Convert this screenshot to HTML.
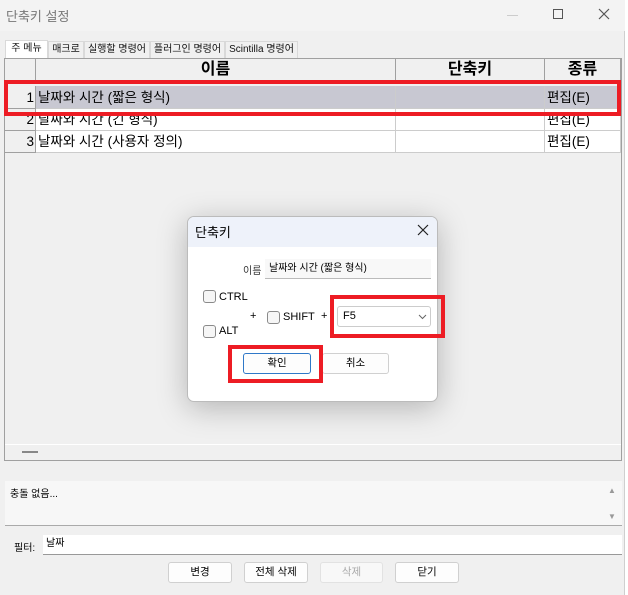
<!DOCTYPE html>
<html><head><meta charset="utf-8"><style>
*{box-sizing:border-box;margin:0;padding:0}
body{width:628px;height:595px;background:#fff;font-family:"Liberation Sans","Noto Sans CJK KR",sans-serif;position:relative;overflow:hidden;color:#000}
.a{position:absolute}
.win{left:0;top:0;width:625px;height:595px;background:#f0f0f0;border-right:1px solid #cfcfcf}
.tb{left:0;top:0;width:625px;height:31px;background:#f3f3f3}
.tab{top:41px;height:17px;font-size:10px;line-height:16px;text-align:center;border:1px solid #d9d9d9;border-bottom:none;background:#f0f0f0;color:#111}
.hd{font-size:16px;font-weight:bold;text-align:center;line-height:22px;background:#f0f0f0;border-right:1px solid #a0a0a0;border-bottom:1px solid #a0a0a0}
.cell{font-size:13.5px;line-height:22px;border-right:1px solid #ccc;border-bottom:1px solid #ccc;background:#fff;padding-left:2px;white-space:nowrap;overflow:hidden}
.rh{background:#f0f0f0;text-align:right;padding-right:1px;border-right:1px solid #a0a0a0;border-bottom:1px solid #a0a0a0}
.red{border:4px solid #ed1c24}
.btn{height:21px;background:#fdfdfd;border:1px solid #d0d0d0;border-radius:3px;font-size:10.5px;text-align:center;line-height:19px}
.cb{width:13px;height:13px;border:1px solid #8a8a8a;border-radius:3px;background:#f6f6f6}
.lb{font-size:11px;line-height:13px}
</style></head><body>
<div class="a win"></div>
<div class="a tb"></div>
<div class="a" style="left:6px;top:6px;font-size:13px;color:#777">단축키 설정</div>
<div class="a" style="left:507px;top:15px;width:11px;height:1px;background:#ccc"></div>
<div class="a" style="left:553px;top:9px;width:10px;height:10px;border:1px solid #555"></div>
<svg class="a" style="left:598px;top:8px" width="12" height="12"><path d="M1 1L11 11M11 1L1 11" stroke="#555" stroke-width="1.2"/></svg>

<div class="a tab" style="left:5px;width:43px;background:#fff;top:40px;height:19px">주 메뉴</div>
<div class="a tab" style="left:48px;width:36px">매크로</div>
<div class="a tab" style="left:84px;width:66px">실행할 명령어</div>
<div class="a tab" style="left:150px;width:75px">플러그인 명령어</div>
<div class="a tab" style="left:225px;width:73px">Scintilla 명령어</div>

<div class="a" style="left:4px;top:58px;width:618px;height:403px;border:1px solid #a0a0a0;background:#f0f0f0"></div>
<div class="a hd" style="left:5px;top:59px;width:31px;height:24px"></div>
<div class="a hd" style="left:36px;top:59px;width:360px;height:24px">이름</div>
<div class="a hd" style="left:396px;top:59px;width:149px;height:24px">단축키</div>
<div class="a hd" style="left:545px;top:59px;width:76px;height:24px">종류</div>

<div class="a cell rh" style="left:5px;top:86px;width:31px;height:23px;line-height:24px">1</div>
<div class="a cell" style="left:36px;top:86px;width:360px;height:23px;background:#c8c8d2;line-height:24px">날짜와 시간 (짧은 형식)</div>
<div class="a cell" style="left:396px;top:86px;width:149px;height:23px;background:#c8c8d2"></div>
<div class="a cell" style="left:545px;top:86px;width:76px;height:23px;background:#c8c8d2;line-height:24px">편집(E)</div>

<div class="a cell rh" style="left:5px;top:109px;width:31px;height:22px">2</div>
<div class="a cell" style="left:36px;top:109px;width:360px;height:22px">날짜와 시간 (긴 형식)</div>
<div class="a cell" style="left:396px;top:109px;width:149px;height:22px"></div>
<div class="a cell" style="left:545px;top:109px;width:76px;height:22px">편집(E)</div>
<div class="a cell rh" style="left:5px;top:131px;width:31px;height:22px">3</div>
<div class="a cell" style="left:36px;top:131px;width:360px;height:22px">날짜와 시간 (사용자 정의)</div>
<div class="a cell" style="left:396px;top:131px;width:149px;height:22px"></div>
<div class="a cell" style="left:545px;top:131px;width:76px;height:22px">편집(E)</div>

<div class="a red" style="left:4px;top:80px;width:617px;height:36px"></div>
<div class="a" style="left:5px;top:444px;width:616px;height:1px;background:#fff"></div>
<div class="a" style="left:22px;top:451px;width:16px;height:2px;background:#888"></div>

<!-- dialog -->
<div class="a" style="left:187px;top:216px;width:251px;height:186px;background:#fff;border:1px solid #bbb;border-radius:7px;box-shadow:0 6px 30px rgba(0,0,0,.25);overflow:hidden">
<div class="a" style="left:0;top:0;width:251px;height:30px;background:#eef2fa"></div>
</div>
<div class="a" style="left:195px;top:222px;font-size:13px">단축키</div>
<svg class="a" style="left:417px;top:224px" width="12" height="12"><path d="M1 1L11 11M11 1L1 11" stroke="#222" stroke-width="1.2"/></svg>
<div class="a" style="left:243px;top:262px;font-size:10px;color:#333">이름</div>
<div class="a" style="left:265px;top:259px;width:166px;height:20px;background:#f8f8f8;border-bottom:1px solid #bbb;font-size:10px;line-height:19px;padding-left:4px">날짜와 시간 (짧은 형식)</div>
<div class="a cb" style="left:203px;top:290px"></div><div class="a lb" style="left:219px;top:291px">CTRL</div>
<div class="a cb" style="left:203px;top:325px"></div><div class="a lb" style="left:219px;top:325px">ALT</div>
<div class="a lb" style="left:250px;top:310px">+</div>
<div class="a cb" style="left:267px;top:311px"></div><div class="a lb" style="left:283px;top:311px">SHIFT</div>
<div class="a lb" style="left:321px;top:310px">+</div>
<div class="a" style="left:337px;top:306px;width:94px;height:21px;background:#fff;border:1px solid #ccc;border-radius:3px;font-size:11px;line-height:19px;padding-left:5px">F5</div>
<svg class="a" style="left:418px;top:314px" width="9" height="6"><path d="M1 1L4.5 4.5L8 1" stroke="#666" fill="none"/></svg>
<div class="a red" style="left:330px;top:295px;width:115px;height:43px"></div>
<div class="a btn" style="left:243px;top:353px;width:68px;border:1px solid #2f78c8">확인</div>
<div class="a btn" style="left:322px;top:353px;width:67px">취소</div>
<div class="a red" style="left:228px;top:345px;width:95px;height:38px"></div>

<!-- bottom -->
<div class="a" style="left:5px;top:481px;width:617px;height:45px;background:#f7f7f7;border-bottom:1px solid #aaa"></div>
<div class="a" style="left:10px;top:485px;font-size:10px">충돌 없음...</div>
<div class="a" style="left:608px;top:486px;font-size:8px;color:#999">▲</div>
<div class="a" style="left:608px;top:512px;font-size:8px;color:#999">▼</div>
<div class="a" style="left:14px;top:539px;font-size:10px">필터:</div>
<div class="a" style="left:43px;top:535px;width:579px;height:20px;background:#fff;border-bottom:1px solid #999;font-size:10px;line-height:18px;padding-left:3px">날짜</div>
<div class="a btn" style="left:168px;top:562px;width:64px">변경</div>
<div class="a btn" style="left:244px;top:562px;width:64px">전체 삭제</div>
<div class="a btn" style="left:320px;top:562px;width:63px;color:#aaa;border-color:#e2e2e2;background:#f8f8f8">삭제</div>
<div class="a btn" style="left:395px;top:562px;width:64px">닫기</div>
</body></html>
